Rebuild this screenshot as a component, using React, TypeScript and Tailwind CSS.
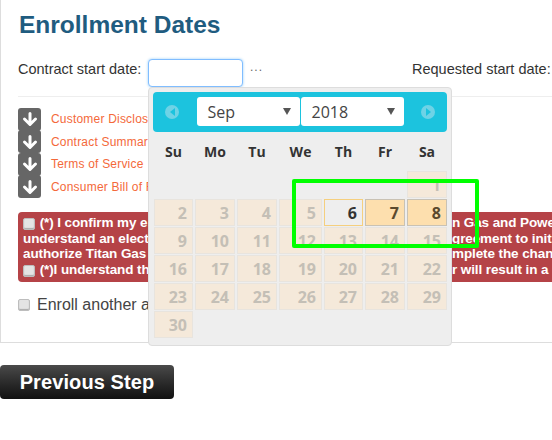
import React from "react";

const sans = "font-['Liberation_Sans',Arial,sans-serif]";
const cal = "font-['Open_Sans',sans-serif]";
const links = ["Customer Disclos", "Contract Summar", "Terms of Service", "Consumer Bill of R"];
const names = ["Su", "Mo", "Tu", "We", "Th", "Fr", "Sa"];

function Arrow() {
  return (
    <div className="w-[23px] h-[23px] shrink-0 rounded-[3px] bg-[#666] flex items-center justify-center">
      <svg width="16" height="16" viewBox="0 0 16 16" fill="none" stroke="#fff" strokeWidth="3" strokeLinecap="round" strokeLinejoin="round">
        <path d="M8 2.5v10M2.5 8 8 13.5 13.5 8" />
      </svg>
    </div>
  );
}

function Box() {
  return (
    <span className="inline-block align-[-3px] mr-px w-[12px] h-[12px] rounded-[2px] border border-[#bdbdbd] bg-[#e4e4e4] shadow-[inset_0_-1px_1px_#aaa]" />
  );
}

function Cell({ n, kind }: { n?: number; kind?: "today" | "on" }) {
  if (!n) return <div />;
  const base = "h-[27px] flex items-center justify-end pr-[5px] text-[16px] leading-none border font-bold";
  if (kind === "today") return <div className={`${base} text-[#333] bg-[#eeeeee] border-[#f5cf7e]`}>{n}</div>;
  if (kind === "on") return <div className={`${base} text-[#5b4a2e] bg-[#fddfae] border-[#c9c2b4]`}>{n}</div>;
  return <div className={`${base} text-[#c4bfb6] bg-[#f5e9da] border-[#e8e4de]`}>{n}</div>;
}

function Select({ label }: { label: string }) {
  return (
    <div className="w-[103px] h-[29px] bg-white rounded-[3px] flex items-center justify-between pl-[11px] pr-[9px] text-[16px] text-[#444]">
      <span>{label}</span>
      <span className="w-0 h-0 border-l-[4px] border-r-[4px] border-t-[7px] border-l-transparent border-r-transparent border-t-[#555]" />
    </div>
  );
}

function NavDot({ right }: { right?: boolean }) {
  return (
    <div className="w-[14px] h-[14px] rounded-full bg-[#6ed3e6] flex items-center justify-center">
      <span className={`w-0 h-0 border-t-[4px] border-b-[4px] border-t-transparent border-b-transparent ${right ? "border-l-[5px] border-l-[#1cc3de]" : "border-r-[5px] border-r-[#1cc3de]"}`} />
    </div>
  );
}

export default function App() {
  const rows: (number | undefined)[] = [
    undefined, undefined, undefined, undefined, undefined, undefined, 1,
    2, 3, 4, 5, 6, 7, 8,
    9, 10, 11, 12, 13, 14, 15,
    16, 17, 18, 19, 20, 21, 22,
    23, 24, 25, 26, 27, 28, 29,
    30,
  ];
  return (
    <div className={`relative w-[552px] h-[440px] overflow-hidden bg-white text-[#333] ${sans}`}>
      <div className="h-[343px] border-l border-b border-[#ddd] pl-[17px] flex flex-col">
        <h1 className="ml-px text-[24.5px] leading-[28px] font-bold text-[#1f5c80] mt-[11px] whitespace-nowrap">Enrollment Dates</h1>
        <div className="mt-[20px] h-[28px] flex items-start text-[14.5px] leading-[20px] whitespace-nowrap">
          <span className="w-[130px]">Contract start date:</span>
          <span className="w-[95px] h-[28px] rounded-[4px] border border-[#80bdff] shadow-[0_0_3px_#9ccff8] bg-white" />
          <span className="ml-[7px] mt-[-2px] text-[#666] text-[12px] tracking-[1px]">...</span>
          <span className="ml-[149px]">Requested start date:</span>
        </div>
        <div className="mt-[9px] h-px bg-[#eee]" />
        <div className="mt-[11px] w-[130px] flex flex-col">
          {links.map((l) => (
            <div key={l} className="h-[22.5px] flex items-center gap-[10px] whitespace-nowrap text-[12px] text-[#f4693a]">
              <Arrow />
              <span className="tracking-[0.2px]">{l}</span>
            </div>
          ))}
        </div>
        <div className="mt-[14px] bg-[#b54347] rounded-l-[4px] h-[70px] pt-[3px] flex justify-between text-white font-bold text-[13.5px] tracking-[-0.1px] leading-[15.5px] whitespace-nowrap overflow-hidden">
          <div className="w-[130px] pl-[5px]">
            <div><Box /> (*) I confirm my e</div>
            <div>understand an elect</div>
            <div>authorize Titan Gas</div>
            <div><Box /> (*)I understand th</div>
          </div>
          <div className="w-[100px]">
            <div>n Gas and Powe</div>
            <div>greement to initi</div>
            <div>mplete the chang</div>
            <div>r will result in a</div>
          </div>
        </div>
        <div className="mt-[11px] flex items-center text-[16px] whitespace-nowrap">
          <Box />
          <span className="ml-[6px] text-[#444]">Enroll another a</span>
        </div>
      </div>
      <div className="mt-[22px]">
        <button className="w-[174px] h-[34px] rounded-[4px] bg-gradient-to-b from-[#4a4a4a] to-[#111] text-white font-bold text-[20px] tracking-[0.1px] leading-none">
          Previous Step
        </button>
      </div>

      <div className={`absolute left-[148px] top-[87px] w-[304px] h-[259px] bg-[#eeeeee] border border-[#ddd] rounded-[4px] p-[4px] ${cal}`}>
        <div className="h-[40px] rounded-[4px] bg-[#1cc3de] flex items-center justify-between px-[12px]">
          <NavDot />
          <div className="flex gap-px -mt-px">
            <Select label="Sep" />
            <Select label="2018" />
          </div>
          <NavDot right />
        </div>
        <div className="grid grid-cols-[39px_40px_40px_43px_39px_40px_40px] gap-x-[2px] pl-[1px] mt-[9px] h-[21px] text-[14px] font-bold text-[#333] text-center leading-[21px]">
          {names.map((n) => <div key={n}>{n}</div>)}
        </div>
        <div className="grid grid-cols-[39px_40px_40px_43px_39px_40px_40px] gap-x-[2px] gap-y-px pl-[1px] mt-[9px]">
          {rows.map((n, i) => (
            <Cell key={i} n={n} kind={n === 6 ? "today" : n === 7 || n === 8 ? "on" : undefined} />
          ))}
        </div>
      </div>

      <div className="absolute left-[292px] top-[179px] w-[187px] h-[69px] border-[4px] border-[#00ff00] rounded-[2px]" />
    </div>
  );
}
